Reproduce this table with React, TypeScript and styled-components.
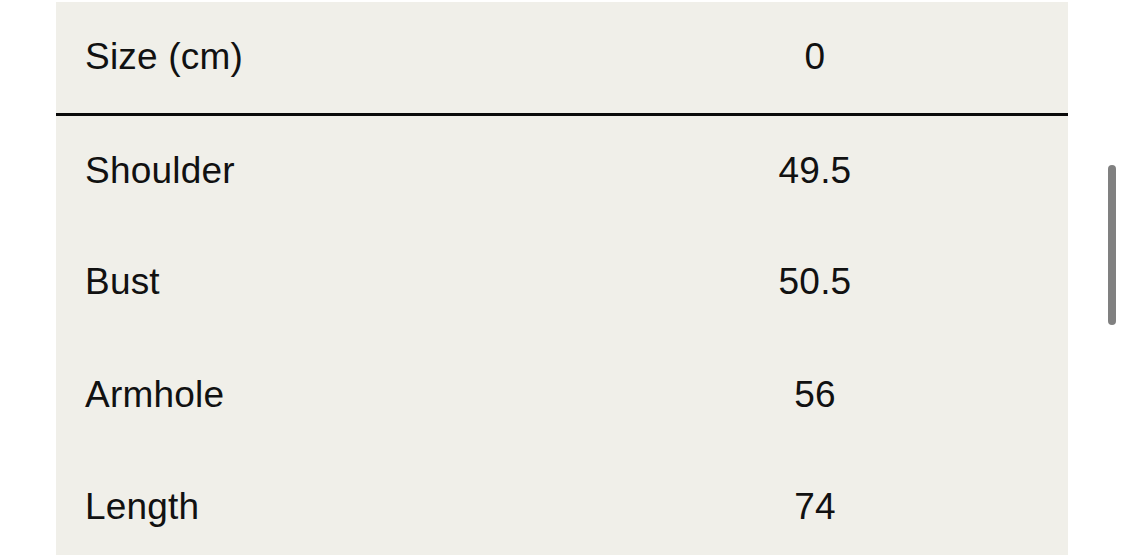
import React from 'react';
import styled, { createGlobalStyle } from 'styled-components';

const GlobalStyle = createGlobalStyle`
  html, body {
    margin: 0;
    padding: 0;
    background: #ffffff;
    overflow: hidden;
  }
  body {
    font-family: "Liberation Sans", Arial, sans-serif;
    color: #111111;
  }
`;

const Page = styled.div`
  display: flex;
  align-items: flex-start;
  padding: 2px 0 0 56px;
  height: 553px;
  overflow: hidden;
`;

const SizeTable = styled.table`
  width: 1012px;
  border-collapse: collapse;
  table-layout: fixed;
  background: #f0efe9;
`;

const HeadRow = styled.tr`
  height: 112px;
  border-bottom: 3px solid #0a0a0a;
`;

const BodyRow = styled.tr`
  height: 112.3px;
`;

const Cell = styled.td<{ $center?: boolean }>`
  box-sizing: border-box;
  width: 506px;
  padding: 0 0 0 ${(p) => (p.$center ? '0' : '29px')};
  text-align: ${(p) => (p.$center ? 'center' : 'left')};
  font-size: 37px;
  letter-spacing: 0.2px;
  font-weight: 400;
  color: #111111;
  vertical-align: middle;
`;

const ScrollThumb = styled.div`
  margin: 163px 0 0 40px;
  width: 8px;
  height: 160px;
  border-radius: 4px;
  background: #808080;
`;

const rows: [string, string][] = [
  ['Shoulder', '49.5'],
  ['Bust', '50.5'],
  ['Armhole', '56'],
  ['Length', '74'],
];

const App: React.FC = () => {
  return (
    <>
      <GlobalStyle />
      <Page>
        <SizeTable>
          <thead>
            <HeadRow>
              <Cell as="th" style={{ fontWeight: 400 }}>Size (cm)</Cell>
              <Cell as="th" $center style={{ fontWeight: 400 }}>0</Cell>
            </HeadRow>
          </thead>
          <tbody>
            {rows.map(([label, value]) => (
              <BodyRow key={label}>
                <Cell>{label}</Cell>
                <Cell $center>{value}</Cell>
              </BodyRow>
            ))}
          </tbody>
        </SizeTable>
        <ScrollThumb />
      </Page>
    </>
  );
};

export default App;
